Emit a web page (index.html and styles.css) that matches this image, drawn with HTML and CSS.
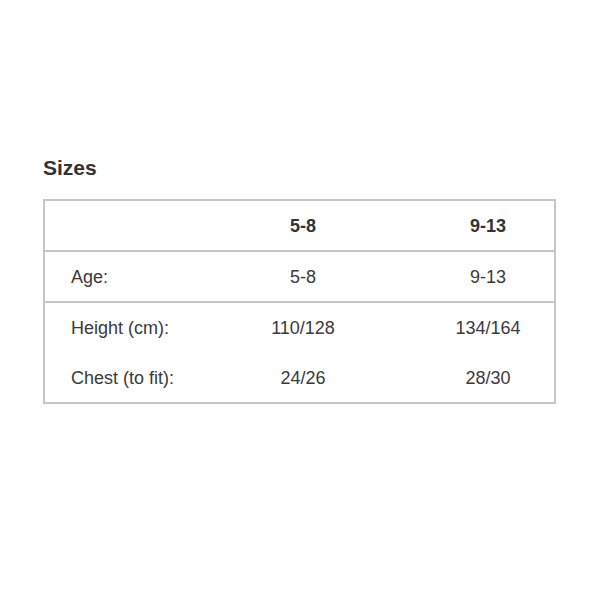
FILE: index.html
```html
<!DOCTYPE html>
<html>
<head>
<meta charset="utf-8">
<link rel="stylesheet" href="styles.css">
</head>
<body>
<div class="wrap">
  <h2 class="title">Sizes</h2>
  <table class="sizes">
    <thead>
      <tr class="sep"><th class="label"></th><th class="c2">5-8</th><th class="c3">9-13</th></tr>
    </thead>
    <tbody>
      <tr class="sep"><td class="label">Age:</td><td>5-8</td><td>9-13</td></tr>
      <tr><td class="label">Height (cm):</td><td>110/128</td><td>134/164</td></tr>
      <tr class="last"><td class="label">Chest (to fit):</td><td>24/26</td><td>28/30</td></tr>
    </tbody>
  </table>
</div>
</body>
</html>
```
FILE: styles.css
```css
html, body { margin: 0; padding: 0; background: #fff; }
body { font-family: "Liberation Sans", Arial, sans-serif; color: #3a3a3a; }
.wrap { padding: 155px 44px 0 43px; }
.title { margin: 0 0 19px 0; font-size: 21px; font-weight: bold; line-height: 25px; color: #333; }
.sizes {
  width: 513px;
  border: 2px solid #c6c6c6;
  border-spacing: 0;
  border-collapse: separate;
  font-size: 18px;
  color: #3a3a3a;
  table-layout: fixed;
}
.sizes th, .sizes td { padding: 2px 0 0 0; text-align: center; height: 47px; box-sizing: content-box; }
.sizes tr.last td { height: 48px; }
.sizes th { font-weight: bold; color: #333; }
.sizes .label { text-align: left; padding-left: 26px; width: 113px; }
.sizes .c2 { width: 238px; }
.sizes tr.sep th, .sizes tr.sep td { border-bottom: 2px solid #c6c6c6; }
```
